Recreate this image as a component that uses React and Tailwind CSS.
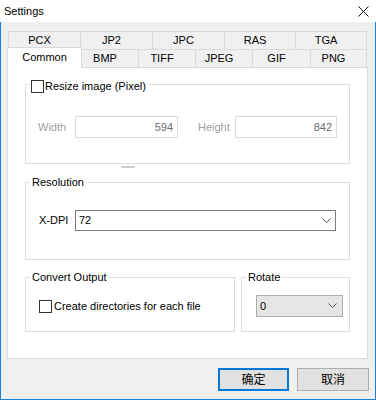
import React from "react";

const backRow = [
  { label: "PCX", cls: "w-[73px] border-l" },
  { label: "JP2", cls: "w-[72px]" },
  { label: "JPC", cls: "w-[72px]" },
  { label: "RAS", cls: "w-[71px]" },
  { label: "TGA", cls: "w-[71px]" },
];

const frontRow = [
  { label: "BMP", cls: "w-[57px]" },
  { label: "TIFF", cls: "w-[57px]" },
  { label: "JPEG", cls: "w-[57px]" },
  { label: "GIF", cls: "w-[58px]" },
  { label: "PNG", cls: "w-[56px]" },
];

function Chevron() {
  return (
    <svg width="9" height="6" viewBox="0 0 9 6" className="shrink-0">
      <path d="M0.5 0.5 L4.5 4.5 L8.5 0.5" fill="none" stroke="#555" strokeWidth="1" />
    </svg>
  );
}

function Checkbox() {
  return <span className="block w-[13px] h-[13px] border border-[#333] bg-white shrink-0" />;
}

function Tab({ label, cls }) {
  return (
    <div
      className={`${cls} h-full border-t border-r border-[#d9d9d9] bg-[#f0f0f0] flex items-center justify-center pr-[10px] text-[11px] leading-none`}
    >
      {label}
    </div>
  );
}

export default function App() {
  return (
    <div className="w-[376px] h-[400px] bg-white flex flex-col text-[11px] text-black font-['Liberation_Sans','Noto_Sans_CJK_SC',sans-serif]">
      {/* title bar */}
      <div className="h-[22px] flex items-center justify-between pl-[4px] pr-[7px] shrink-0">
        <span className="text-[11px]">Settings</span>
        <svg width="11" height="11" viewBox="0 0 11 11">
          <path d="M0.5 0.5 L10.5 10.5 M10.5 0.5 L0.5 10.5" stroke="#111" strokeWidth="1" />
        </svg>
      </div>

      <div className="flex-1 bg-[#f0f0f0] border-x border-b border-[#1a82d6] pl-[6px] pr-[7px] pt-[9px] flex flex-col">
        {/* back tab row */}
        <div className="flex h-[18px] pl-[1px]">
          {backRow.map((t) => (
            <div
              key={t.label}
              className={`${t.cls} h-full border-t border-r border-[#d9d9d9] bg-[#f0f0f0] flex items-center justify-center pr-[10px] leading-none`}
            >
              {t.label}
            </div>
          ))}
        </div>

        {/* front tab row */}
        <div className="flex h-[18px] items-end">
          <div className="relative z-10 w-[75px] h-[21px] -mb-[1px] bg-white border-l border-t border-r border-[#d9d9d9] flex items-center justify-center pb-[2px] leading-none">
            Common
          </div>
          <div className="flex h-[18px] self-start">
            {frontRow.map((t) => (
              <Tab key={t.label} {...t} />
            ))}
          </div>
        </div>

        {/* tab page */}
        <div className="w-[361px] bg-white border border-[#d9d9d9] pt-[8px] px-[17px] pb-[26px]">
          <fieldset className="h-[88px] border border-[#dcdcdc] px-[4px]">
            <legend className="pl-[1px] pr-[3px] leading-[16px]">
              <span className="relative top-[2px] flex items-center gap-[1px]">
                <Checkbox />
                <span>Resize image (Pixel)</span>
              </span>
            </legend>
            <div className="mt-[24px] flex items-center text-[#a0a0a0]">
              <span className="ml-[8px] w-[37px]">Width</span>
              <div className="w-[103px] h-[22px] border border-[#d9d9d9] flex items-center justify-end pr-[4px] text-[#6d6d6d]">
                594
              </div>
              <span className="ml-[20px] w-[37px]">Height</span>
              <div className="w-[102px] h-[22px] border border-[#d9d9d9] flex items-center justify-end pr-[4px] text-[#6d6d6d]">
                842
              </div>
            </div>
          </fieldset>

          <div className="h-[10px] pt-[2px]">
            <div className="ml-[96px] w-[14px] h-[2px] rounded-full bg-[#cfcfcf]" />
          </div>

          <fieldset className="h-[86px] border border-[#dcdcdc] px-[4px]">
            <legend className="px-[2px] leading-[16px]">Resolution</legend>
            <div className="mt-[20px] flex items-center">
              <span className="ml-[9px] w-[36px]">X-DPI</span>
              <div className="w-[261px] h-[21px] border border-[#7a7a7a] bg-white flex items-center justify-between pl-[3px] pr-[4px]">
                <span>72</span>
                <Chevron />
              </div>
            </div>
          </fieldset>

          <div className="mt-[9px] flex gap-[6px]">
            <fieldset className="w-[210px] h-[63px] border border-[#dcdcdc] px-[4px]">
              <legend className="px-[2px] leading-[16px]">Convert Output</legend>
              <div className="mt-[13px] ml-[9px] h-[16px] flex items-center gap-[2px]">
                <Checkbox />
                <span>Create directories for each file</span>
              </div>
            </fieldset>
            <fieldset className="w-[109px] h-[63px] border border-[#dcdcdc] px-[4px]">
              <legend className="px-[2px] leading-[16px]">Rotate</legend>
              <div className="mt-[10px] ml-[10px] w-[87px] h-[22px] border border-[#acacac] bg-[#e5e5e5] flex items-center justify-between pl-[3px] pr-[5px]">
                <span>0</span>
                <Chevron />
              </div>
            </fieldset>
          </div>
        </div>

        {/* dialog buttons */}
        <div className="mt-[9px] flex justify-end gap-[8px] -mr-[1px]">
          <button className="w-[71px] h-[23px] border-2 border-[#0078d7] bg-[#e1e1e1] text-[12px] leading-none flex items-center justify-center">
            确定
          </button>
          <button className="w-[72px] h-[23px] border border-[#adadad] bg-[#e1e1e1] text-[12px] leading-none flex items-center justify-center">
            取消
          </button>
        </div>
      </div>
    </div>
  );
}
